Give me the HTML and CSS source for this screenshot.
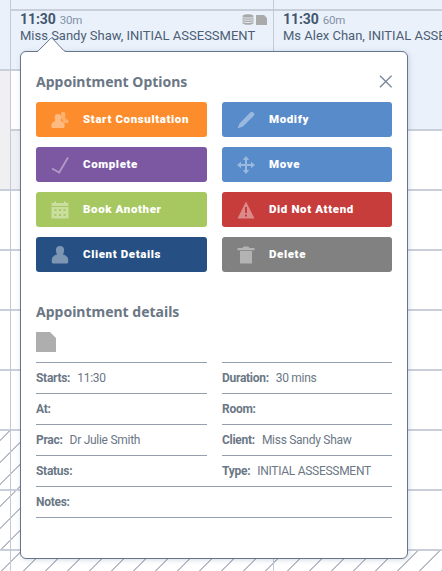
FILE: index.html
```html
<!DOCTYPE html>
<html lang="en">
<head>
    <meta charset="UTF-8">
    <title>Appointments</title>
    <link rel="stylesheet" href="styles.css">
</head>

<body>
    <div class="calendar">
        <div class="column times">
            <div class="slot first booked"></div>
            <div class="slot booked"></div>
            <div class="slot closed"></div>
            <div class="slot closed"></div>
            <div class="slot"></div>
            <div class="slot"></div>
            <div class="slot"></div>
            <div class="slot"></div>
            <div class="slot hatched"></div>
            <div class="slot hatched"></div>
            <div class="slot hatched"></div>
        </div>
        <div class="column">
            <div class="slot first booked"></div>
            <div class="slot booked">
                <div class="slotTop">
                    <span class="time">11:30</span>
                    <span class="length">30m</span>
                    <span class="slotIcons">
                        <svg width="12" height="11" viewBox="0 0 12 11">
                            <path fill="#aaa" d="M0.5 2C0.5 -0.4 11.5 -0.4 11.5 2V9C11.5 11.4 0.5 11.4 0.5 9z"/>
                            <path fill="none" stroke="#eaf1fa" stroke-width="0.9" d="M0.5 3C2 4.5 10 4.5 11.5 3M0.5 5.2C2 6.7 10 6.7 11.5 5.2M0.5 7.4C2 8.9 10 8.9 11.5 7.4"/>
                        </svg>
                        <svg width="11" height="10" viewBox="0 0 11 10"><path fill="#aaa" d="M0 0H8L11 3V10H0z"/></svg>
                    </span>
                </div>
                <div class="client">Miss Sandy Shaw, INITIAL ASSESSMENT</div>
            </div>
            <div class="slot"></div>
            <div class="slot blocked"></div>
            <div class="slot"></div>
            <div class="slot"></div>
            <div class="slot"></div>
            <div class="slot"></div>
            <div class="slot hatched"></div>
            <div class="slot hatched"></div>
            <div class="slot hatched"></div>
        </div>
        <div class="column">
            <div class="slot first booked"></div>
            <div class="slot booked long">
                <div class="slotTop">
                    <span class="time">11:30</span>
                    <span class="length">60m</span>
                </div>
                <div class="client">Ms Alex Chan, INITIAL ASSESSMENT</div>
            </div>
            <div class="slot"></div>
            <div class="slot"></div>
            <div class="slot"></div>
            <div class="slot"></div>
            <div class="slot"></div>
            <div class="slot"></div>
            <div class="slot"></div>
            <div class="slot hatched"></div>
        </div>
    </div>

    <div class="popup">
        <svg class="arrow" width="32" height="16" viewBox="0 0 32 16">
            <path fill="#fff" d="M0 16V15L2 14.5L16 0.7L29 14.5L32 15V16z"/>
            <path fill="none" stroke="#66758a" d="M0 14.5Q1.5 14.5 2.5 13.5L14.5 1.6Q15.5 0.7 16.5 1.6L27.5 13.3Q28.7 14.5 31 14.5"/>
        </svg>
        <div class="popupHead">
            <h2>Appointment Options</h2>
            <svg class="close" width="13" height="13" viewBox="0 0 13 13"><path fill="none" stroke="#7c8a9c" stroke-width="1.5" d="M1 0.7L12.6 12.3M12.6 0.7L1 12.3"/></svg>
        </div>

        <div class="buttons">
            <button class="btn orange">
                <svg width="18" height="18" viewBox="0 0 18 18">
                    <path opacity=".75" d="M10 3C10 0 14.5 0 14.5 3.5C14.5 5 14 6 14 7L17.5 9.5V12H13L10 7z"/>
                    <path d="M6.8 3C9.5 3 10.5 5 10 7.5C9.8 8.5 9.5 9 10 10L13 11.8C13.8 13 14 15 13 17H1C0 15 0.3 13 1 12L4 10C4.3 9 4 8.5 3.8 7.5C3.3 5 4.3 3 6.8 3z"/>
                </svg>
                Start Consultation
            </button>
            <button class="btn blue">
                <svg width="18" height="18" viewBox="0 0 18 18"><path d="M0.5 17.5L2.5 12.5L13.5 1.3Q14.5 0.3 15.8 1.2L17 2.3Q17.8 3.5 17 4.5L6 15.5z"/></svg>
                Modify
            </button>
            <button class="btn purple">
                <svg width="18" height="18" viewBox="0 0 18 18"><path class="line" d="M1 12.5L8.2 16.5L17 1.5"/></svg>
                Complete
            </button>
            <button class="btn blue">
                <svg width="18" height="18" viewBox="0 0 18 18"><path d="M9 0L12.2 4H10V8H14V5.8L18 9L14 12.2V10H10V14H12.2L9 18L5.8 14H8V10H4V12.2L0 9L4 5.8V8H8V4H5.8z"/></svg>
                Move
            </button>
            <button class="btn green">
                <svg width="18" height="18" viewBox="0 0 18 18"><path fill-rule="evenodd" d="M0.5 2H3V0.5H5V2H13V0.5H15V2H17.5V5H0.5zM0.5 6H17.5V17.5H0.5zM3.5 8V10H5.5V8zM8 8V10H10V8zM12.5 8V10H14.5V8zM3.5 13V15H5.5V13zM8 13V15H10V13zM12.5 13V15H14.5V13z"/></svg>
                Book Another
            </button>
            <button class="btn red">
                <svg width="18" height="18" viewBox="0 0 18 18"><path fill-rule="evenodd" d="M9 0.5L17.5 17.5H0.5zM8 6V12H10V6zM8 13.5V15.5H10V13.5z"/></svg>
                Did Not Attend
            </button>
            <button class="btn navy">
                <svg width="18" height="18" viewBox="0 0 18 18"><path d="M9 0C12 0 13.5 2 13 5C12.8 6.5 12.4 7.5 12 8.5C14.5 9 16.3 10.5 17 12.5C17.500 15 17.500 17.400 16 17.500H2C0.500 17.400 0.500 15 1 12.500C1.700 10.500 3.500 9 6 8.500C5.600 7.500 5.200 6.500 5 5C4.500 2 6 0 9 0z"/></svg>
                Client Details
            </button>
            <button class="btn grey">
                <svg width="18" height="18" viewBox="0 0 18 18"><path d="M0.5 2H5.5Q6 0.5 7 0.5H11Q12 0.5 12.5 2H17.5V4.2H0.5zM3 5H15V17.5H3z"/></svg>
                Delete
            </button>
        </div>

        <h2>Appointment details</h2>
        <svg class="note" width="20" height="20" viewBox="0 0 20 20"><path fill="#aeaeae" d="M0 0H14L20 6V20H0z"/></svg>

        <div class="details">
            <div class="detail"><b>Starts:</b>11:30</div>
            <div class="detail"><b>Duration:</b>30 mins</div>
            <div class="detail"><b>At:</b></div>
            <div class="detail"><b>Room:</b></div>
            <div class="detail"><b>Prac:</b>Dr Julie Smith</div>
            <div class="detail"><b>Client:</b>Miss Sandy Shaw</div>
            <div class="detail"><b>Status:</b></div>
            <div class="detail"><b>Type:</b>INITIAL ASSESSMENT</div>
            <div class="detail notes"><b>Notes:</b></div>
        </div>
    </div>
</body></html>
```

FILE: styles.css
```css
* {
    margin: 0;
    padding: 0;
    box-sizing: border-box;
}

body {
    width: 442px;
    height: 571px;
    overflow: hidden;
    position: relative;
    background: #fff;
    font-family: Roboto, "Liberation Sans", sans-serif;
}

/* calendar behind the popup */
.calendar {
    display: grid;
    grid-template-columns: 11px 263px 168px;
    height: 571px;
    overflow: hidden;
}

.column {
    border-right: 1px solid #c3cad6;
}
.column:last-child {
    border-right: none;
}

.slot {
    height: 60px;
    border-top: 2px solid #c9cfda;
    overflow: hidden;
}
.slot.first {
    height: 9px;
    border-top: none;
}
.slot.long {
    height: 120px;
}
.times .slot:nth-child(2),
.times .slot:nth-child(4) {
    border-top: none;
}
.booked {
    background-color: #eaf1fa;
}
.closed {
    background-color: #f0f0f2;
}
.blocked {
    background-color: #eff0f4;
}
.hatched {
    background-image: repeating-linear-gradient(135deg, #b9bdc8 0, #b9bdc8 1px, transparent 1px, transparent 15.556px);
    background-attachment: fixed;
}

.slotTop {
    display: flex;
    align-items: baseline;
    height: 16px;
    line-height: 16px;
    padding: 0 6px 0 9px;
}
.time {
    font-size: 14px;
    font-weight: 700;
    color: #43566f;
    letter-spacing: -0.05px;
}
.length {
    font-size: 11.5px;
    color: #8292a8;
    margin-left: 4px;
    letter-spacing: -0.3px;
}
.slotIcons {
    display: flex;
    gap: 2px;
    align-items: center;
    align-self: center;
    margin-left: auto;
    padding-top: 1px;
}
.client {
    font-size: 13px;
    line-height: 18px;
    padding-left: 9px;
    color: #4c5d75;
    white-space: nowrap;
}

/* popup */
.popup {
    position: absolute;
    left: 20px;
    top: 51px;
    width: 388px;
    height: 508px;
    padding: 20px 15px;
    background-color: #fff;
    border: 1px solid #66758a;
    border-radius: 6px;
    box-shadow: 1px 1px 5px rgba(80, 110, 150, 0.25);
}
.arrow {
    position: absolute;
    left: 15px;
    top: -15px;
}
.popupHead {
    display: flex;
    justify-content: space-between;
    align-items: center;
    margin-bottom: 10px;
}
.close {
    margin-bottom: 2px;
}
h2 {
    font-family: "Noto Sans", sans-serif;
    font-size: 14px;
    font-weight: 700;
    line-height: 20px;
    color: #6b7785;
}

.buttons {
    display: grid;
    grid-template-columns: 171px 170px;
    gap: 10px 15px;
    margin-bottom: 30px;
}
.btn {
    display: flex;
    align-items: center;
    gap: 14px;
    height: 35px;
    padding: 0 0 1px 15px;
    border: none;
    border-radius: 3px;
    color: #fff;
    font-family: Roboto, "Liberation Sans", sans-serif;
    font-size: 11.5px;
    font-weight: 900;
    line-height: 14px;
    letter-spacing: 0.62px;
    white-space: nowrap;
    cursor: pointer;
}
.btn svg {
    margin-top: 2px;
    fill: rgba(255, 255, 255, 0.4);
}
.btn .line {
    fill: none;
    stroke: rgba(255, 255, 255, 0.4);
    stroke-width: 1.8;
}
.orange { background-color: #fd8d2c; }
.blue { background-color: #588bca; }
.purple { background-color: #7c58a3; }
.green { background-color: #a7c861; }
.red { background-color: #c63d3c; }
.navy { background-color: #265083; }
.grey { background-color: #818181; }

.note {
    display: block;
    margin-top: 10px;
    margin-bottom: 10px;
}
.details {
    display: grid;
    grid-template-columns: 171px 170px;
    column-gap: 15px;
}
.detail {
    height: 31px;
    line-height: 30px;
    border-top: 1px solid #949fae;
    font-size: 12px;
    letter-spacing: -0.28px;
    color: #6b7785;
}
.detail b {
    font-weight: 700;
    margin-right: 7px;
}
.notes {
    grid-column: 1 / 3;
    height: 32px;
    border-bottom: 1px solid #949fae;
}
```
